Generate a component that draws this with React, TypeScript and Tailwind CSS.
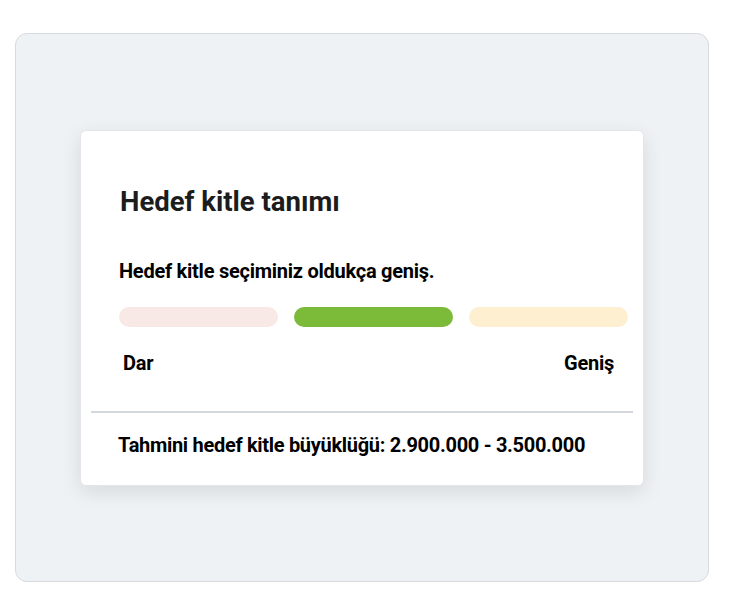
import React from "react";

export default function App() {
  return (
    <div className="w-[737px] h-[607px] bg-white pt-[33px] pl-[15px]" style={{ fontFamily: "Roboto, 'Noto Sans', sans-serif" }}>
      <div className="w-[694px] h-[549px] rounded-[12px] border border-[#d5dae0] bg-[#eff2f5] flex items-center justify-center">
        <div className="w-[564px] h-[356px] bg-white rounded-[6px] border border-[#e3e6ea] shadow-[0_6px_20px_rgba(0,0,0,0.10)] flex flex-col">
          <div className="pl-[38px] pr-[15px] pt-[55px]">
            <h1 className="pl-[1px] text-[27.5px] leading-[32px] font-bold text-[#1c1c1c]">Hedef kitle tanımı</h1>
            <p className="mt-[41px] text-[20px] leading-[24px] tracking-[-0.25px] font-bold text-black">Hedef kitle seçiminiz oldukça geniş.</p>
            <div className="mt-[24px] flex gap-[16px]">
              <div className="flex-1 h-[20px] rounded-full bg-[#f9e9e6]" />
              <div className="flex-1 h-[20px] rounded-full bg-[#7cbb3a]" />
              <div className="flex-1 h-[20px] rounded-full bg-[#fdefcf]" />
            </div>
            <div className="mt-[24px] flex justify-between pl-[4px] pr-[14px] text-[20px] leading-[24px] tracking-[-0.25px] font-bold text-black">
              <span>Dar</span>
              <span>Geniş</span>
            </div>
          </div>
          <div className="mx-[10px] mt-[36px] h-[2px] bg-[#d3d6da]" />
          <p className="pl-[37px] mt-[20px] text-[20px] leading-[24px] tracking-[-0.3px] font-bold text-black">Tahmini hedef kitle büyüklüğü: 2.900.000 - 3.500.000</p>
        </div>
      </div>
    </div>
  );
}
